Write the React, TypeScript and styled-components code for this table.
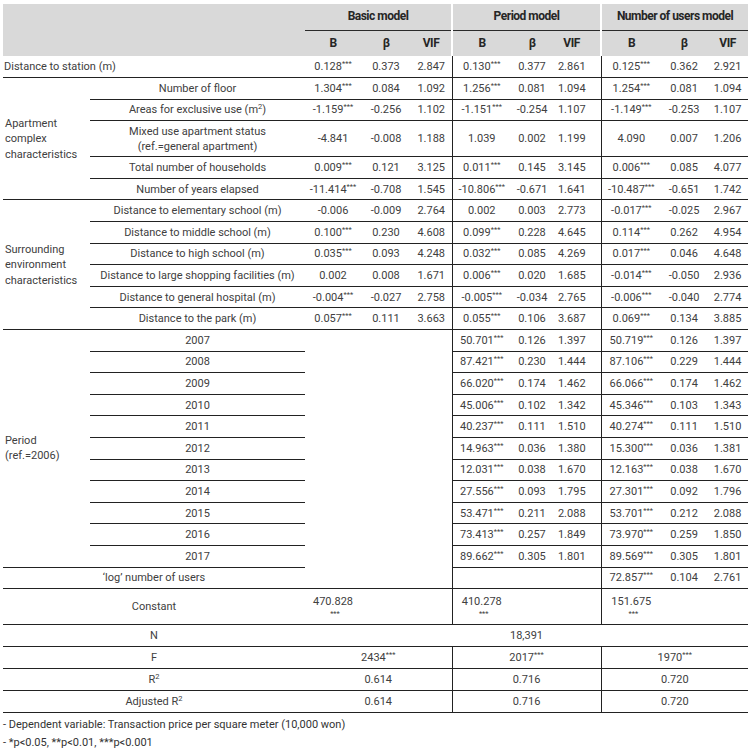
import React from 'react';
import styled, { createGlobalStyle } from 'styled-components';

const Global = createGlobalStyle`
  html, body { margin: 0; padding: 0; background: #ffffff; }
  body { font-family: Roboto, "Liberation Sans", Arial, sans-serif; color: #404040; }
`;

const Page = styled.div`
  padding: 4px 5px 0 3px;
  width: 745px;
`;

const Table = styled.table`
  width: 745px;
  table-layout: fixed;
  border-collapse: collapse;
  font-size: 11px;
  line-height: 13px;
`;

const Row = styled.tr<{ $h?: number }>`
  height: ${(p) => p.$h ?? 21.6}px;
`;

const Th = styled.th<{ $gap?: boolean; $under?: boolean; $pr?: number }>`
  background: #d9d9d9;
  color: #262626;
  font-weight: 700;
  font-size: 12px;
  letter-spacing: -0.5px;
  padding: 0 ${(p) => p.$pr ?? 0}px 0 0;
  text-align: center;
  vertical-align: middle;
  border-left: ${(p) => (p.$gap ? '2px solid #ffffff' : 'none')};
  border-bottom: ${(p) => (p.$under ? '1px solid #2a2a2a' : 'none')};
`;

const Td = styled.td<{ $left?: boolean; $bb?: boolean; $bl?: boolean; $pr?: number; $pl?: number }>`
  padding: 0 ${(p) => p.$pr ?? 0}px 0 ${(p) => p.$pl ?? 0}px;
  text-align: ${(p) => (p.$left ? 'left' : 'center')};
  vertical-align: middle;
  white-space: nowrap;
  border-bottom: ${(p) => (p.$bb ? '1px solid #222222' : 'none')};
  border-left: ${(p) => (p.$bl ? '1px solid #222222' : 'none')};
`;

const GroupLabel = styled.td`
  padding: 0 0 0 2px;
  text-align: left;
  vertical-align: middle;
  line-height: 15.5px;
  border-bottom: 1px solid #222222;
`;

const WrapText = styled.span`
  display: inline-block;
  line-height: 15px;
  white-space: normal;
`;

const Sup = styled.sup`
  font-size: 7.5px;
  line-height: 0;
  vertical-align: 4px;
  letter-spacing: 0;
`;

const Stack = styled.div`
  display: flex;
  flex-direction: column;
  align-items: center;
  line-height: 15px;
`;

const Stars = styled.span`
  font-size: 7.5px;
  line-height: 10px;
  padding-left: 4px;
`;

const Notes = styled.div`
  font-size: 11px;
  line-height: 18px;
  padding-top: 3px;
  color: #333333;
`;

type V = string;

const Val: React.FC<{ v: V }> = ({ v }) => {
  const m = v.match(/^(.*?)(\*+)$/);
  if (m) {
    return (
      <>
        {m[1]}
        <Sup>{m[2]}</Sup>
      </>
    );
  }
  return <>{v}</>;
};

const Cols = () => (
  <colgroup>
    <col style={{ width: 87 }} />
    <col style={{ width: 215 }} />
    <col style={{ width: 56 }} />
    <col style={{ width: 50 }} />
    <col style={{ width: 41 }} />
    <col style={{ width: 59 }} />
    <col style={{ width: 42 }} />
    <col style={{ width: 48 }} />
    <col style={{ width: 60 }} />
    <col style={{ width: 46 }} />
    <col style={{ width: 41 }} />
  </colgroup>
);

const Group: React.FC<{ vals: V[]; bl?: boolean; bb?: boolean; pr?: boolean }> = ({ vals, bl, bb, pr }) => (
  <>
    <Td $bl={bl} $bb={bb}>
      <Val v={vals[0]} />
    </Td>
    <Td $bb={bb}>
      <Val v={vals[1]} />
    </Td>
    <Td $bb={bb} $pr={pr ? 10 : 0}>
      <Val v={vals[2]} />
    </Td>
  </>
);

const aptRows: { label: React.ReactNode; v: V[]; h?: number }[] = [
  { label: 'Number of floor', v: ['1.304***', '0.084', '1.092', '1.256***', '0.081', '1.094', '1.254***', '0.081', '1.094'] },
  {
    label: (
      <>
        Areas for exclusive use (m<Sup>2</Sup>)
      </>
    ),
    v: ['-1.159***', '-0.256', '1.102', '-1.151***', '-0.254', '1.107', '-1.149***', '-0.253', '1.107'],
  },
  {
    label: (
      <WrapText>
        Mixed use apartment status
        <br />
        (ref.=general apartment)
      </WrapText>
    ),
    v: ['-4.841', '-0.008', '1.188', '1.039', '0.002', '1.199', '4.090', '0.007', '1.206'],
    h: 36,
  },
  { label: 'Total number of households', v: ['0.009***', '0.121', '3.125', '0.011***', '0.145', '3.145', '0.006***', '0.085', '4.077'] },
  { label: 'Number of years elapsed', v: ['-11.414***', '-0.708', '1.545', '-10.806***', '-0.671', '1.641', '-10.487***', '-0.651', '1.742'] },
];

const envRows: { label: string; v: V[] }[] = [
  { label: 'Distance to elementary school (m)', v: ['-0.006', '-0.009', '2.764', '0.002', '0.003', '2.773', '-0.017***', '-0.025', '2.967'] },
  { label: 'Distance to middle school (m)', v: ['0.100***', '0.230', '4.608', '0.099***', '0.228', '4.645', '0.114***', '0.262', '4.954'] },
  { label: 'Distance to high school (m)', v: ['0.035***', '0.093', '4.248', '0.032***', '0.085', '4.269', '0.017***', '0.046', '4.648'] },
  { label: 'Distance to large shopping facilities (m)', v: ['0.002', '0.008', '1.671', '0.006***', '0.020', '1.685', '-0.014***', '-0.050', '2.936'] },
  { label: 'Distance to general hospital (m)', v: ['-0.004***', '-0.027', '2.758', '-0.005***', '-0.034', '2.765', '-0.006***', '-0.040', '2.774'] },
  { label: 'Distance to the park (m)', v: ['0.057***', '0.111', '3.663', '0.055***', '0.106', '3.687', '0.069***', '0.134', '3.885'] },
];

const periodRows: { year: string; v: V[] }[] = [
  { year: '2007', v: ['50.701***', '0.126', '1.397', '50.719***', '0.126', '1.397'] },
  { year: '2008', v: ['87.421***', '0.230', '1.444', '87.106***', '0.229', '1.444'] },
  { year: '2009', v: ['66.020***', '0.174', '1.462', '66.066***', '0.174', '1.462'] },
  { year: '2010', v: ['45.006***', '0.102', '1.342', '45.346***', '0.103', '1.343'] },
  { year: '2011', v: ['40.237***', '0.111', '1.510', '40.274***', '0.111', '1.510'] },
  { year: '2012', v: ['14.963***', '0.036', '1.380', '15.300***', '0.036', '1.381'] },
  { year: '2013', v: ['12.031***', '0.038', '1.670', '12.163***', '0.038', '1.670'] },
  { year: '2014', v: ['27.556***', '0.093', '1.795', '27.301***', '0.092', '1.796'] },
  { year: '2015', v: ['53.471***', '0.211', '2.088', '53.701***', '0.212', '2.088'] },
  { year: '2016', v: ['73.413***', '0.257', '1.849', '73.970***', '0.259', '1.850'] },
  { year: '2017', v: ['89.662***', '0.305', '1.801', '89.569***', '0.305', '1.801'] },
];

const ThreeRow: React.FC<{ v: V[] }> = ({ v }) => (
  <>
    <Group vals={v.slice(0, 3)} bb />
    <Group vals={v.slice(3, 6)} bl bb pr />
    <Group vals={v.slice(6, 9)} bl bb />
  </>
);

const Constant: React.FC<{ n: string; bl?: boolean }> = ({ n, bl }) => (
  <>
    <Td $bl={bl} $bb>
      <Stack>
        <span>{n}</span>
        <Stars>***</Stars>
      </Stack>
    </Td>
    <Td $bb />
    <Td $bb />
  </>
);

export default function App() {
  return (
    <Page>
      <Global />
      <Table>
        <Cols />
        <thead>
          <Row $h={26}>
            <Th colSpan={2} rowSpan={2} />
            <Th colSpan={3} $under>
              Basic model
            </Th>
            <Th colSpan={3} $gap $under>
              Period model
            </Th>
            <Th colSpan={3} $gap $under>
              Number of users model
            </Th>
          </Row>
          <Row $h={26}>
            <Th>B</Th>
            <Th>β</Th>
            <Th>VIF</Th>
            <Th $gap>B</Th>
            <Th>β</Th>
            <Th $pr={10}>VIF</Th>
            <Th $gap>B</Th>
            <Th>β</Th>
            <Th>VIF</Th>
          </Row>
        </thead>
        <tbody>
          <Row>
            <Td colSpan={2} $left $bb $pl={1}>
              Distance to station (m)
            </Td>
            <ThreeRow v={['0.128***', '0.373', '2.847', '0.130***', '0.377', '2.861', '0.125***', '0.362', '2.921']} />
          </Row>

          {aptRows.map((r, i) => (
            <Row key={'a' + i} $h={r.h}>
              {i === 0 && (
                <GroupLabel rowSpan={aptRows.length}>
                  Apartment
                  <br />
                  complex
                  <br />
                  characteristics
                </GroupLabel>
              )}
              <Td $bb>{r.label}</Td>
              <ThreeRow v={r.v} />
            </Row>
          ))}

          {envRows.map((r, i) => (
            <Row key={'e' + i}>
              {i === 0 && (
                <GroupLabel rowSpan={envRows.length}>
                  Surrounding
                  <br />
                  environment
                  <br />
                  characteristics
                </GroupLabel>
              )}
              <Td $bb>{r.label}</Td>
              <ThreeRow v={r.v} />
            </Row>
          ))}

          {periodRows.map((r, i) => (
            <Row key={'p' + i}>
              {i === 0 && (
                <GroupLabel rowSpan={periodRows.length}>
                  Period
                  <br />
                  (ref.=2006)
                </GroupLabel>
              )}
              <Td $bb>{r.year}</Td>
              {i === 0 && <Td colSpan={3} rowSpan={periodRows.length + 1} $bb />}
              <Group vals={r.v.slice(0, 3)} bl bb pr />
              <Group vals={r.v.slice(3, 6)} bl bb />
            </Row>
          ))}

          <Row>
            <Td colSpan={2} $bb>
              ‘log’ number of users
            </Td>
            <Td colSpan={3} $bl $bb />
            <Group vals={['72.857***', '0.104', '2.761']} bl bb />
          </Row>

          <Row $h={36}>
            <Td colSpan={2} $bb>
              Constant
            </Td>
            <Constant n="470.828" />
            <Constant n="410.278" bl />
            <Constant n="151.675" bl />
          </Row>

          <Row $h={22}>
            <Td colSpan={2} $bb>
              N
            </Td>
            <Td colSpan={9} $bb>
              18,391
            </Td>
          </Row>
          <Row $h={22}>
            <Td colSpan={2} $bb>
              F
            </Td>
            <Td colSpan={3} $bb>
              <Val v="2434***" />
            </Td>
            <Td colSpan={3} $bb $bl>
              <Val v="2017***" />
            </Td>
            <Td colSpan={3} $bb $bl>
              <Val v="1970***" />
            </Td>
          </Row>
          <Row $h={21.5}>
            <Td colSpan={2} $bb>
              R<Sup>2</Sup>
            </Td>
            <Td colSpan={3} $bb>
              0.614
            </Td>
            <Td colSpan={3} $bb $bl>
              0.716
            </Td>
            <Td colSpan={3} $bb $bl>
              0.720
            </Td>
          </Row>
          <Row $h={22}>
            <Td colSpan={2} $bb>
              Adjusted R<Sup>2</Sup>
            </Td>
            <Td colSpan={3} $bb>
              0.614
            </Td>
            <Td colSpan={3} $bb $bl>
              0.716
            </Td>
            <Td colSpan={3} $bb $bl>
              0.720
            </Td>
          </Row>
        </tbody>
      </Table>
      <Notes>
        <div>- Dependent variable: Transaction price per square meter (10,000 won)</div>
        <div>- *p&lt;0.05, **p&lt;0.01, ***p&lt;0.001</div>
      </Notes>
    </Page>
  );
}
